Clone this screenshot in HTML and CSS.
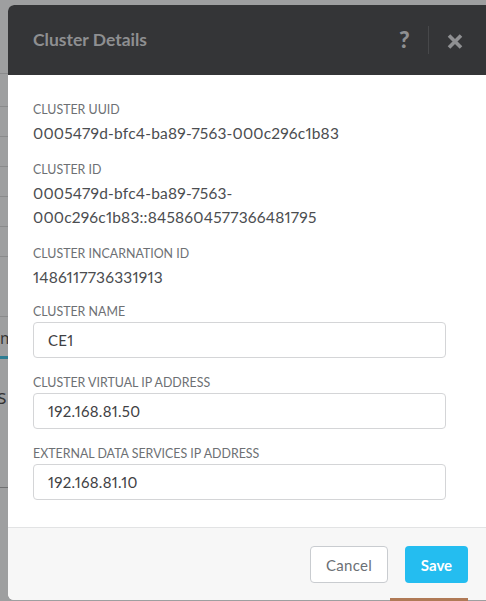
FILE: index.html
```html
<!DOCTYPE html>
<html>
<head>
<meta charset="utf-8">
<link rel="stylesheet" href="styles.css">
</head>
<body>
<div class="page">
  <div class="bg-row first"></div>
  <div class="bg-row"></div>
  <div class="bg-row"></div>
  <div class="bg-row"></div>
  <div class="bg-row"></div>
  <div class="bg-row"></div>
  <div class="bg-row tall"></div>
  <div class="bg-tab">m</div>
  <div class="bg-text">s</div>
  <div class="bg-row end"></div>
</div>
<div class="modal">
  <div class="modal-header">
    <div class="title">Cluster Details</div>
    <div class="actions">
      <span class="help">?</span>
      <span class="sep"></span>
      <svg class="close" width="16" height="15" viewBox="0 0 16 15"><path d="M2 1.5 L14 13.5 M14 1.5 L2 13.5" stroke="#8f9092" stroke-width="3.6"/></svg>
    </div>
  </div>
  <div class="modal-body">
    <div class="field">
      <div class="label">CLUSTER UUID</div>
      <div class="value">0005479d-bfc4-ba89-7563-000c296c1b83</div>
    </div>
    <div class="field">
      <div class="label">CLUSTER ID</div>
      <div class="value">0005479d-bfc4-ba89-7563-<br>000c296c1b83::8458604577366481795</div>
    </div>
    <div class="field last-info">
      <div class="label">CLUSTER INCARNATION ID</div>
      <div class="value">1486117736331913</div>
    </div>
    <div class="field input-field">
      <div class="label">CLUSTER NAME</div>
      <div class="input">CE1</div>
    </div>
    <div class="field input-field">
      <div class="label">CLUSTER VIRTUAL IP ADDRESS</div>
      <div class="input">192.168.81.50</div>
    </div>
    <div class="field input-field">
      <div class="label">EXTERNAL DATA SERVICES IP ADDRESS</div>
      <div class="input">192.168.81.10</div>
    </div>
  </div>
  <div class="modal-footer">
    <button class="btn cancel">Cancel</button>
    <button class="btn save">Save</button>
  </div>
</div>
<div class="under"></div>
</body>
</html>
```
FILE: styles.css
```css
html, body {
  margin: 0;
  padding: 0;
}
body {
  width: 486px;
  height: 601px;
  overflow: hidden;
  background: #9e9fa0;
  font-family: "Lato", "Open Sans", sans-serif;
  font-variant-numeric: proportional-nums;
  position: relative;
}
.page {
  padding-top: 73px;
}
.bg-row {
  height: 30px;
  box-sizing: border-box;
  border-top: 1px solid #8a8b8c;
}
.bg-row.first {
  height: 33px;
}
.bg-row.tall {
  height: 60px;
}
.bg-tab {
  height: 43px;
  box-sizing: border-box;
  border-top: 1px solid #8a8b8c;
  border-bottom: 3px solid #2d7d92;
  font-family: "Open Sans", sans-serif;
  font-size: 16px;
  line-height: 20px;
  padding-top: 11px;
  margin-left: -6px;
  padding-left: 6px;
  color: #333;
}
.bg-text {
  height: 128px;
  box-sizing: border-box;
  font-family: "Open Sans", sans-serif;
  font-size: 20px;
  line-height: 24px;
  padding-top: 26px;
  margin-left: -3px;
  color: #333;
}
.bg-row.end {
  border-top: 1px solid #707172;
}
.modal {
  position: absolute;
  left: 8px;
  top: 5px;
  width: 500px;
  height: 595px;
  background: #fff;
  border-radius: 6px;
  overflow: hidden;
  display: flex;
  flex-direction: column;
}
.modal-header {
  height: 70px;
  background: #343537;
  display: flex;
  align-items: center;
  padding-left: 25px;
  padding-right: 45px;
  box-sizing: border-box;
  flex: none;
}
.title {
  font-family: "Lato", sans-serif;
  font-weight: 700;
  font-size: 17.5px;
  color: #8e8f91;
  flex: 1;
  margin-top: -2px;
}
.actions {
  display: flex;
  align-items: center;
}
.help {
  font-family: "Lato", sans-serif;
  font-weight: 900;
  font-size: 23px;
  line-height: 24px;
  color: #8f9092;
  width: 13px;
  margin-top: -2px;
}
.sep {
  width: 1px;
  height: 28px;
  background: #47484a;
  margin-left: 16px;
  margin-right: 18px;
}
.close {
  display: block;
  margin-top: 2px;
}
.modal-body {
  padding: 27px 0 0 25px;
  width: 413px;
  flex: 1;
  min-height: 0;
}
.field {
  margin-bottom: 17px;
}
.field.last-info {
  margin-bottom: 15px;
}
.label {
  font-size: 12.4px;
  line-height: 16px;
  color: #6d7074;
  text-transform: uppercase;
}
.value {
  margin-top: 3px;
  font-size: 15.5px;
  line-height: 24px;
  letter-spacing: 0.2px;
  color: #4b4d50;
}
.input-field .label {
  margin-bottom: 2px;
}
.input {
  height: 36px;
  box-sizing: border-box;
  border: 1px solid #d4d5d7;
  border-radius: 4px;
  padding: 0 14px;
  font-size: 15px;
  line-height: 34px;
  letter-spacing: 0.3px;
  color: #3f4144;
}
.modal-footer {
  flex: none;
  height: 73px;
  background: #f7f7f7;
  border-top: 1px solid #e2e3e4;
  box-sizing: border-box;
  display: flex;
  align-items: flex-start;
  padding-top: 18px;
  padding-left: 302px;
  gap: 17px;
}
.btn {
  height: 37px;
  border-radius: 4px;
  font-family: "Lato", sans-serif;
  font-size: 15px;
  padding: 0;
  cursor: pointer;
}
.cancel {
  width: 78px;
  background: #fff;
  border: 1px solid #c9ccd0;
  color: #6b7075;
  letter-spacing: 0.3px;
}
.save {
  width: 63px;
  background: #24bdf0;
  border: none;
  color: #fff;
  font-weight: 700;
}
.under {
  position: absolute;
  left: 390px;
  top: 598px;
  width: 78px;
  height: 3px;
  background: #b07a56;
}
```
